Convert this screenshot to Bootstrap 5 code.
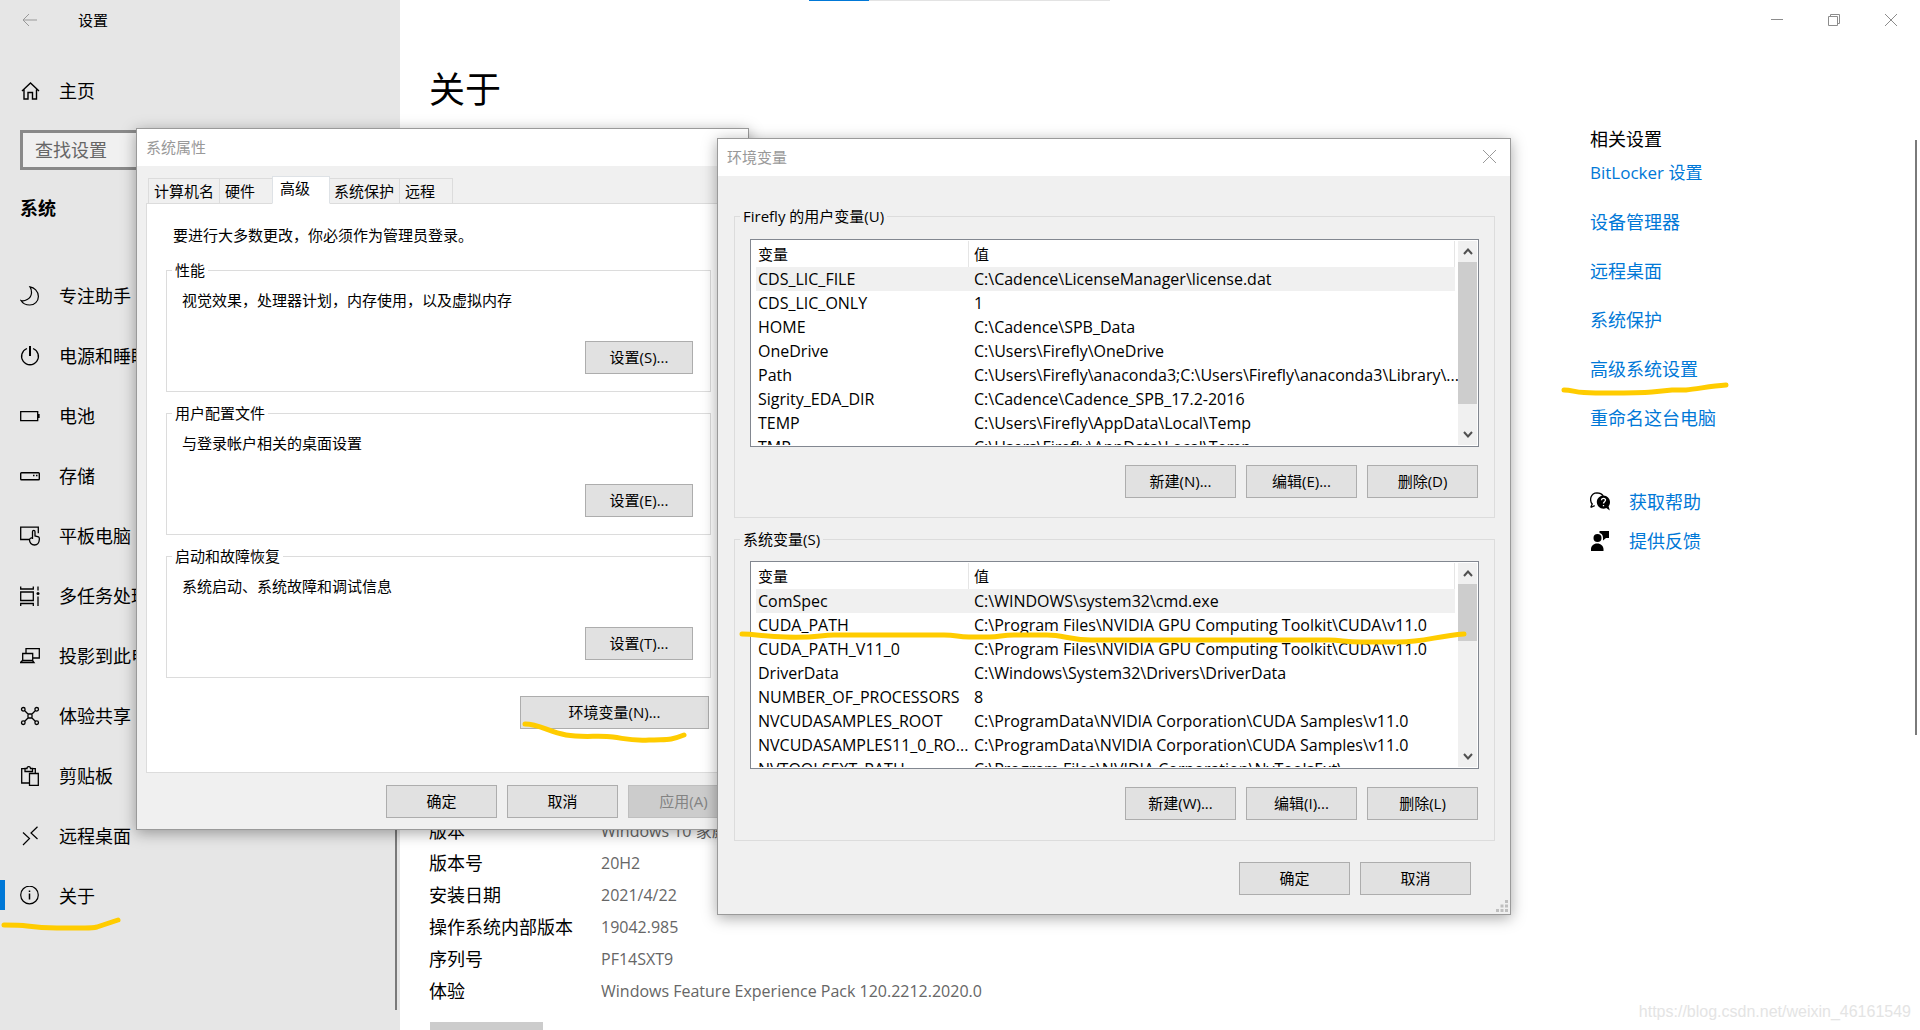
<!DOCTYPE html>
<html lang="zh-CN">
<head>
<meta charset="utf-8">
<meta name="viewport" content="width=device-width, initial-scale=1">
<title>设置</title>
<link href="https://cdn.jsdelivr.net/npm/bootstrap@5.3.0/dist/css/bootstrap.min.css" rel="stylesheet">
<style>
  :root { --accent: #0078d7; --ink: #000; --pen: #ffcc00; --edge: #dcdcdc; }
  body { font-family: "Open Sans", "Noto Sans CJK SC", sans-serif; font-size: 18px; line-height: 24px; color: var(--ink); background: #fff; }
  .shell { height: 100vh; }
  a { color: var(--accent); text-decoration: none; }
  svg { display: block; fill: none; stroke: currentColor; flex: none; }
  .pen { position: absolute; stroke: var(--pen); stroke-width: 5; stroke-linecap: round; stroke-linejoin: round; pointer-events: none; overflow: visible; z-index: 5; }

  /* settings sidebar */
  .side { width: 400px; background: #e6e6e6; }
  .side-top { height: 40px; padding-left: 22px; gap: 41px; font-size: 15px; }
  .plain-btn { border: 0; padding: 0; background: none; color: #999; }
  .side-link { height: 60px; padding-left: 20px; gap: 19px; color: var(--ink); }
  .home-link { margin-top: 21px; }
  .search { margin: 9px 20px 0; height: 40px; border: 3px solid #8a8a8a; border-radius: 0; background: #f0f0f0; font-size: 18px; padding: 0 12px; width: 360px; }
  .search::placeholder { color: #666; }
  .side-title { font-size: 18px; line-height: 24px; margin: 26px 0 46px 20px; font-weight: 700; }
  .side-link.current::before { content: ""; position: absolute; left: 0; top: 14px; width: 5px; height: 30px; background: var(--accent); }
  .thumb-line { position: absolute; width: 2px; background: #7a7a7a; }
  .side .thumb-line { right: 3px; top: 260px; bottom: 20px; }

  /* settings content */
  .win-controls { padding-right: 1px; }
  .win-btn { width: 57px; height: 40px; border: 0; background: none; color: #8c8c8c; }
  .loader { position: absolute; left: 409px; top: 0; width: 301px; height: 1px; background: #e3e3e3; }
  .loader span { display: block; width: 60px; height: 1px; background: var(--accent); }
  .about { padding-left: 29px; }
  .about h1 { font-size: 36px; line-height: 48px; margin: 26px 0 701px; font-weight: 400; }
  .spec { grid-template-columns: 172px 1fr; grid-auto-rows: 32px; line-height: 32px; }
  .spec dt { font-weight: 400; }
  .spec dd { margin: 0; color: #666; font-size: 16px; }
  .copy-btn { width: 113px; height: 40px; margin: 15px 0 0 1px; border: 0; background: #ccc; }
  .related { width: 330px; padding-top: 87px; }
  .related h2 { font-size: 18px; line-height: 24px; font-weight: 400; margin: 0 0 10px; }
  .related-links { gap: 25px; margin-bottom: 60px; }
  .related-links .mixed { font-size: 17px; }
  .help-links { gap: 15px; }
  .help-links a { gap: 19px; }
  .help-links svg { color: #000; }
  .content > .thumb-line { right: 3px; top: 140px; height: 595px; }
  .watermark { position: absolute; right: 9px; bottom: 6px; font: 16px/24px "Liberation Sans", sans-serif; color: #e4e4e4; }

  /* classic dialogs */
  .dlg { position: absolute; background: #f0f0f0; border: 1px solid #9a9a9a; font-size: 15px; line-height: 20px; box-shadow: 0 3px 14px rgba(0,0,0,.35); }
  .dlg-title { height: 37px; padding: 0 10px 2px 9px; background: #fff; color: #999; }
  .dlg-btn { width: 111px; height: 33px; border: 1px solid #adadad; background: #e1e1e1; color: #000; padding: 0 0 2px; }
  .dlg-btn:disabled { background: #ccc; border-color: #bfbfbf; color: #838383; }
  .dlg fieldset { border: 1px solid var(--edge); }
  .dlg legend { float: none; width: auto; font-size: 15px; line-height: 20px; margin: 0 0 0 -10px; padding: 0 3px; }

  .props { left: 136px; top: 128px; width: 613px; z-index: 1; }
  .prop-tabs { margin: 10px 11px 0; border: 0; position: relative; z-index: 1; }
  .prop-tabs .nav-link { height: 26px; border: 1px solid var(--edge); border-right-width: 0; border-radius: 0; padding: 0 0 0 5px; margin: 0; color: #000; background: #f0f0f0; text-align: left; line-height: 24px; white-space: nowrap; }
  .prop-tabs .nav-link.active { height: 28px; background: #fff; border-bottom-color: #fff; border-right-width: 1px; padding: 0 0 4px 7px; line-height: 22px; color: #000; }
  .prop-tabs .active + .nav-link { border-left-width: 0; padding-left: 4px; }
  .prop-tabs .last { border-right-width: 1px; }
  .w-a { width: 71px; } .w-b { width: 53px; } .w-c { width: 58px; } .w-d { width: 69px; } .w-e { width: 54px; }
  .prop-page { margin: -1px 9px 0; border: 1px solid var(--edge); background: #fff; padding: 21px 27px 0 19px; height: 570px; }
  .prop-page > p { margin: 0 0 15px 7px; }
  .prop-page fieldset { height: 132px; margin-bottom: 11px; padding: 0 17px 16px 15px; }
  .prop-page fieldset p { margin: 10px 0 31px; }
  .prop-page fieldset .dlg-btn { width: 108px; }
  .env-row { padding: 7px 2px 0 0; }
  .prop-page .env-btn { width: 189px; }
  .props-foot { padding: 12px 9px 11px; gap: 10px; }

  .envs { left: 717px; top: 138px; width: 794px; z-index: 2; }
  .envs form { padding: 30px 15px 19px 16px; }
  .envs fieldset { height: 312px; margin-bottom: 11px; padding: 0 15px 0 15px; }
  .var-list { height: 208px; border: 1px solid #828790; background: #fff; margin-top: 12px; padding: 1px 1px 1px 5px; }
  .user-vars .var-list { margin-top: 13px; }
  .var-pane { padding-right: 3px; }
  .var-table { table-layout: fixed; width: 100%; margin: 0; border-collapse: separate; border-spacing: 0; }
  .var-table th, .var-table td { height: 24px; line-height: 24px; padding: 0 0 0 5px; white-space: nowrap; font-weight: 400; }
  .var-table td { font-size: 16px; }
  .var-table th { height: 26px; border-right: 1px solid #e5e5e5; line-height: 26px; }
  .var-table th:first-child { width: 213px; }
  .var-table th:first-child, .var-table td:first-child { padding-left: 2px; }
  .var-table .picked td { background: #f0f0f0; }
  .bar { width: 20px; background: #f0f0f0; }
  .bar button { height: 21px; border: 0; padding: 0; background: none; color: #505050; }
  .bar-thumb { background: #cdcdcd; width: 19px; }
  .bar-thumb.tall { height: 142px; } .bar-thumb.short { height: 57px; }
  .list-btns { gap: 10px; margin-top: 18px; padding-right: 1px; }
  .envs-foot { gap: 10px; margin-top: 21px; padding-right: 24px; }
  .grip { position: absolute; right: 2px; bottom: 2px; fill: #bfbfbf; stroke: none; }
</style>
</head>
<body>
<div class="shell position-relative overflow-hidden d-flex">

  <aside class="side position-relative flex-shrink-0">
    <div class="side-top d-flex align-items-center">
      <button class="plain-btn" aria-label="返回"><svg width="15" height="14" viewBox="0 0 15 14"><path d="M15 7H1M7 1 1 7l6 6"/></svg></button>
      <span>设置</span>
    </div>
    <a class="side-link home-link d-flex align-items-center" href="#"><svg width="20" height="20" viewBox="0 0 20 20" stroke-width="1.4"><path d="M2 10 10.500 2 19 10M4 8.500V18h4v-6.500h4.500V18h4V8.500"/></svg>主页</a>
    <input class="search form-control" type="text" placeholder="查找设置" aria-label="查找设置">
    <h2 class="side-title">系统</h2>
    <nav>
      <a class="side-link d-flex align-items-center" href="#"><svg width="20" height="20" viewBox="0 0 20 20" stroke-width="1.2"><path d="M10 .8C14 1.500 18.400 5 18.400 10.500c0 5-4 8.500-8.600 8.500-4 0-7.300-1.800-8.800-4.500C4 15.500 11 13.500 11.500 7c.1-2.500-.4-4.500-1.500-6.200Z"/></svg>专注助手</a>
      <a class="side-link d-flex align-items-center" href="#"><svg width="20" height="20" viewBox="0 0 20 20" stroke-width="1.3"><path d="M7 2.500a8.400 8.400 0 1 0 6 0"/><path d="M10 0v10" stroke-width="2"/></svg>电源和睡眠</a>
      <a class="side-link d-flex align-items-center" href="#"><svg width="20" height="20" viewBox="0 0 20 20" stroke-width="1.3"><path d="M.7 5.700h17v9h-17zM19 8v4"/></svg>电池</a>
      <a class="side-link d-flex align-items-center" href="#"><svg width="20" height="20" viewBox="0 0 20 20" stroke-width="1.400"><rect x=".7" y="6.700" width="18.600" height="7" rx=".8"/><path d="M13 9.500h1.500M16 9.500h1.500"/></svg>存储</a>
      <a class="side-link d-flex align-items-center" href="#"><svg width="20" height="20" viewBox="0 0 20 20" stroke-width="1.300"><path d="M9 13.500H.7V1.200h17.600v6M12.500 13V5.800c0-1.800 2.500-1.800 2.500 0V10l3.500.8c1 .3 1 1 .8 3-.2 3-1.800 5.200-4.800 5.200-3 0-5-2.500-5-5 0-1.500 1.500-2.500 3-2"/></svg>平板电脑</a>
      <a class="side-link d-flex align-items-center" href="#"><svg width="20" height="20" viewBox="0 0 20 20" stroke-width="1.300"><path d="M.7 6h12.600v8.500H.7zM.7.500v2.500h12.600V.500M.7 20v-2.500h12.600V20M18 .500v4M18 10.500V20"/><circle cx="18" cy="7.500" r="1.500" fill="currentColor" stroke="none"/></svg>多任务处理</a>
      <a class="side-link d-flex align-items-center" href="#"><svg width="20" height="20" viewBox="0 0 20 20" stroke-width="1.300"><path d="M6 7V2.700h13.300V12H13M2.700 14.500V7.500h10v7M.5 16.500h13.500l-1.500-2h-10z"/></svg>投影到此电脑</a>
      <a class="side-link d-flex align-items-center" href="#"><svg width="20" height="20" viewBox="0 0 20 20" stroke-width="1.300"><path d="M4.500 4.500 8.500 8.500M15.500 4.500l-4 4M4.500 15.500l4-4M15.500 15.500l-4-4M8 8h4v4H8z"/><circle cx="3.300" cy="3.300" r="1.800"/><circle cx="16.700" cy="3.300" r="1.800"/><circle cx="3.300" cy="16.700" r="1.800"/><circle cx="16.700" cy="16.700" r="1.800"/></svg>体验共享</a>
      <a class="side-link d-flex align-items-center" href="#"><svg width="20" height="20" viewBox="0 0 20 20" stroke-width="1.300"><path d="M9 17H1.700V2.700H5M12 2.700h3.300V7M5 5.500V2.500h2C7 0 10.500 0 10.500 2.500h2v3zM9.500 7.500h8.800v11.800H9.500z"/></svg>剪贴板</a>
      <a class="side-link d-flex align-items-center" href="#"><svg width="20" height="20" viewBox="0 0 20 20" stroke-width="1.200"><path d="M3 6.500 9.500 12.500 3 19M17.500 .800 11 7l6.500 6"/></svg>远程桌面</a>
      <a class="side-link current position-relative d-flex align-items-center" href="#"><svg width="20" height="20" viewBox="0 0 20 20" stroke-width="1.200"><circle cx="9.500" cy="9" r="8.800"/><path d="M9.500 7.500v6M9.500 4.500v1.500" stroke-width="1.500"/></svg>关于
        <svg class="pen" style="left:0;top:50px" width="125" height="20" viewBox="0 0 125 20"><path d="M4 9C12 9 20 9 27 10S45 12 57 12H85Q93 12 97 11L118 4"/></svg></a>
    </nav>
    <span class="thumb-line"></span>
  </aside>

  <main class="content position-relative flex-grow-1">
    <div class="loader"><span></span></div>
    <div class="win-controls d-flex justify-content-end">
      <button class="win-btn d-flex align-items-center justify-content-center" aria-label="最小化"><svg width="12" height="12" viewBox="0 0 12 12"><path d="M0 5.500h12"/></svg></button>
      <button class="win-btn d-flex align-items-center justify-content-center" aria-label="还原"><svg width="12" height="12" viewBox="0 0 12 12"><path d="M.5 2.500h9v9h-9zM2.500 2.500v-2h9v9h-2"/></svg></button>
      <button class="win-btn d-flex align-items-center justify-content-center" aria-label="关闭"><svg width="12" height="12" viewBox="0 0 12 12"><path d="M0 0l12 12M12 0 0 12"/></svg></button>
    </div>
    <div class="d-flex">
      <section class="about flex-grow-1">
        <h1>关于</h1>
        <dl class="spec d-grid mb-0">
          <dt>版本</dt><dd>Windows 10 家庭中文版</dd>
          <dt>版本号</dt><dd>20H2</dd>
          <dt>安装日期</dt><dd>2021/4/22</dd>
          <dt>操作系统内部版本</dt><dd>19042.985</dd>
          <dt>序列号</dt><dd>PF14SXT9</dd>
          <dt>体验</dt><dd>Windows Feature Experience Pack 120.2212.2020.0</dd>
        </dl>
        <button class="copy-btn" aria-label="复制"></button>
      </section>
      <section class="related flex-shrink-0">
        <h2>相关设置</h2>
        <div class="related-links d-flex flex-column align-items-start">
          <a class="mixed" href="#">BitLocker 设置</a>
          <a href="#">设备管理器</a>
          <a href="#">远程桌面</a>
          <a href="#">系统保护</a>
          <a class="position-relative" href="#">高级系统设置<svg class="pen" style="left:-30px;top:21px" width="170" height="20" viewBox="0 0 170 20"><path d="M4 12C12 12 14 14 24 14.500S40 15 50 15 80 15 92 14L112 12H126C138 11 150 8 166 7"/></svg></a>
          <a href="#">重命名这台电脑</a>
        </div>
        <div class="help-links d-flex flex-column align-items-start">
          <a class="d-flex align-items-center" href="#"><svg width="20" height="20" viewBox="0 0 20 20"><path d="M.7 15.500 2.200 12C-.8 8 .5 1 7 .8c3 0 5 1.200 6.200 3M.7 15.500l4-1.800" stroke-width="1.300"/><path d="M13.500 3.500c-3.700 0-6.700 3-6.700 6.500s3 6.700 6.700 6.700c1 0 2-.2 2.800-.6l3.500 2.400-1.200-4.300c1-1.200 1.400-2.600 1.400-4.200 0-3.500-3-6.500-6.500-6.500Z" fill="#000" stroke="none"/><path d="M11.500 8.300c0-2.800 4-2.500 4-.2 0 1.700-2 1.500-2 3.400M13.500 13v1.300" stroke="#fff" stroke-width="1.300"/></svg>获取帮助</a>
          <a class="d-flex align-items-center" href="#"><svg width="20" height="20" viewBox="0 0 20 20"><g fill="#000" stroke="none"><circle cx="7.500" cy="7" r="4"/><path d="M1 20v-2c0-3 2.500-5.500 6.200-5.500s6.300 2.500 6.300 5.500v2zM9.500 0H19v7h-3l-3 2.500V7C13 4 11.500 2.500 9.500 2z"/></g></svg>提供反馈</a>
        </div>
      </section>
    </div>
    <span class="thumb-line"></span>
    <span class="watermark">https://blog.csdn.net/weixin_46161549</span>
  </main>

  <section class="dlg props" aria-label="系统属性">
    <div class="dlg-title d-flex align-items-center">系统属性</div>
    <div class="prop-tabs nav nav-tabs align-items-end" role="tablist">
      <button class="nav-link w-a" role="tab">计算机名</button>
      <button class="nav-link w-b" role="tab">硬件</button>
      <button class="nav-link active w-c" role="tab">高级</button>
      <button class="nav-link w-d" role="tab">系统保护</button>
      <button class="nav-link last w-e" role="tab">远程</button>
    </div>
    <div class="prop-page">
      <p>要进行大多数更改，你必须作为管理员登录。</p>
      <fieldset><legend>性能</legend><p>视觉效果，处理器计划，内存使用，以及虚拟内存</p><div class="text-end"><button class="dlg-btn">设置(S)...</button></div></fieldset>
      <fieldset><legend>用户配置文件</legend><p>与登录帐户相关的桌面设置</p><div class="text-end"><button class="dlg-btn">设置(E)...</button></div></fieldset>
      <fieldset><legend>启动和故障恢复</legend><p>系统启动、系统故障和调试信息</p><div class="text-end"><button class="dlg-btn">设置(T)...</button></div></fieldset>
      <div class="env-row d-flex justify-content-end"><button class="dlg-btn env-btn position-relative">环境变量(N)...<svg class="pen" style="left:0;top:20px" width="170" height="30" viewBox="0 0 170 30"><path d="M4 7C18 7 28 15 45 18S78 18 92 20 110 24 128 23 148 24 163 18"/></svg></button></div>
    </div>
    <div class="props-foot d-flex justify-content-end">
      <button class="dlg-btn">确定</button>
      <button class="dlg-btn">取消</button>
      <button class="dlg-btn" disabled>应用(A)</button>
    </div>
  </section>

  <section class="dlg envs" aria-label="环境变量">
    <div class="dlg-title d-flex align-items-center justify-content-between">环境变量<button class="plain-btn me-1" aria-label="关闭"><svg width="13" height="13" viewBox="0 0 13 13"><path d="M0 0l13 13M13 0 0 13"/></svg></button></div>
    <form onsubmit="return false">
      <fieldset class="user-vars">
        <legend>Firefly 的用户变量(U)</legend>
        <div class="var-list d-flex">
          <div class="var-pane flex-grow-1 overflow-hidden">
            <table class="var-table">
              <thead><tr><th scope="col">变量</th><th scope="col">值</th></tr></thead>
              <tbody>
                <tr class="picked"><td>CDS_LIC_FILE</td><td>C:\Cadence\LicenseManager\license.dat</td></tr>
                <tr><td>CDS_LIC_ONLY</td><td>1</td></tr>
                <tr><td>HOME</td><td>C:\Cadence\SPB_Data</td></tr>
                <tr><td>OneDrive</td><td>C:\Users\Firefly\OneDrive</td></tr>
                <tr><td>Path</td><td>C:\Users\Firefly\anaconda3;C:\Users\Firefly\anaconda3\Library\...</td></tr>
                <tr><td>Sigrity_EDA_DIR</td><td>C:\Cadence\Cadence_SPB_17.2-2016</td></tr>
                <tr><td>TEMP</td><td>C:\Users\Firefly\AppData\Local\Temp</td></tr>
                <tr><td>TMP</td><td>C:\Users\Firefly\AppData\Local\Temp</td></tr>
              </tbody>
            </table>
          </div>
          <div class="bar d-flex flex-column align-items-center">
            <button class="d-flex align-items-center" aria-label="向上"><svg width="10" height="7" viewBox="0 0 10 7" stroke-width="2"><path d="M1 6l4-4.500L9 6"/></svg></button>
            <div class="bar-thumb tall"></div>
            <button class="d-flex align-items-center mt-auto" aria-label="向下"><svg width="10" height="7" viewBox="0 0 10 7" stroke-width="2"><path d="M1 1l4 4.500L9 1"/></svg></button>
          </div>
        </div>
        <div class="list-btns d-flex justify-content-end"><button class="dlg-btn">新建(N)...</button><button class="dlg-btn">编辑(E)...</button><button class="dlg-btn">删除(D)</button></div>
      </fieldset>
      <fieldset>
        <legend>系统变量(S)</legend>
        <div class="var-list d-flex position-relative">
          <div class="var-pane flex-grow-1 overflow-hidden">
            <table class="var-table">
              <thead><tr><th scope="col">变量</th><th scope="col">值</th></tr></thead>
              <tbody>
                <tr class="picked"><td>ComSpec</td><td>C:\WINDOWS\system32\cmd.exe</td></tr>
                <tr><td>CUDA_PATH</td><td>C:\Program Files\NVIDIA GPU Computing Toolkit\CUDA\v11.0</td></tr>
                <tr><td>CUDA_PATH_V11_0</td><td>C:\Program Files\NVIDIA GPU Computing Toolkit\CUDA\v11.0</td></tr>
                <tr><td>DriverData</td><td>C:\Windows\System32\Drivers\DriverData</td></tr>
                <tr><td>NUMBER_OF_PROCESSORS</td><td>8</td></tr>
                <tr><td>NVCUDASAMPLES_ROOT</td><td>C:\ProgramData\NVIDIA Corporation\CUDA Samples\v11.0</td></tr>
                <tr><td>NVCUDASAMPLES11_0_RO...</td><td>C:\ProgramData\NVIDIA Corporation\CUDA Samples\v11.0</td></tr>
                <tr><td>NVTOOLSEXT_PATH</td><td>C:\Program Files\NVIDIA Corporation\NvToolsExt\</td></tr>
              </tbody>
            </table>
          </div>
          <div class="bar d-flex flex-column align-items-center">
            <button class="d-flex align-items-center" aria-label="向上"><svg width="10" height="7" viewBox="0 0 10 7" stroke-width="2"><path d="M1 6l4-4.500L9 6"/></svg></button>
            <div class="bar-thumb short"></div>
            <button class="d-flex align-items-center mt-auto" aria-label="向下"><svg width="10" height="7" viewBox="0 0 10 7" stroke-width="2"><path d="M1 1l4 4.500L9 1"/></svg></button>
          </div>
          <svg class="pen" style="left:-12px;top:62px" width="730" height="24" viewBox="0 0 730 24"><path d="M3 10C18 10 24 13 47 13 78 14 80 11 95 11H205C218 11 218 13 230 13H250C262 13 262 11 275 11H308C325 11 330 16 352 16H590C603 16 605 18 622 18H660C685 18 698 12 725 10"/></svg>
        </div>
        <div class="list-btns d-flex justify-content-end"><button class="dlg-btn">新建(W)...</button><button class="dlg-btn">编辑(I)...</button><button class="dlg-btn">删除(L)</button></div>
      </fieldset>
      <div class="envs-foot d-flex justify-content-end"><button class="dlg-btn">确定</button><button class="dlg-btn">取消</button></div>
    </form>
    <svg class="grip" width="12" height="12" viewBox="0 0 12 12"><path d="M9 0h3v3H9zM9 4.500h3v3H9zM9 9h3v3H9zM4.500 4.500h3v3h-3zM4.500 9h3v3h-3zM0 9h3v3H0z"/></svg>
  </section>
</div>
<script src="https://cdn.jsdelivr.net/npm/bootstrap@5.3.0/dist/js/bootstrap.bundle.min.js"></script>
</body>
</html>
